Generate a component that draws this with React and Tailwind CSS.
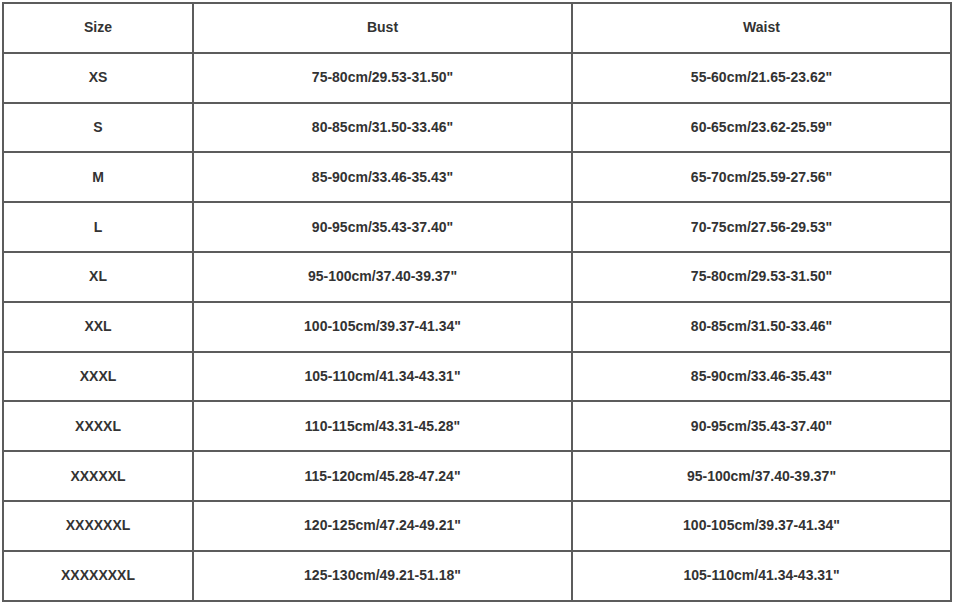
const rows = [
  ['XS', '75-80cm/29.53-31.50"', '55-60cm/21.65-23.62"'],
  ['S', '80-85cm/31.50-33.46"', '60-65cm/23.62-25.59"'],
  ['M', '85-90cm/33.46-35.43"', '65-70cm/25.59-27.56"'],
  ['L', '90-95cm/35.43-37.40"', '70-75cm/27.56-29.53"'],
  ['XL', '95-100cm/37.40-39.37"', '75-80cm/29.53-31.50"'],
  ['XXL', '100-105cm/39.37-41.34"', '80-85cm/31.50-33.46"'],
  ['XXXL', '105-110cm/41.34-43.31"', '85-90cm/33.46-35.43"'],
  ['XXXXL', '110-115cm/43.31-45.28"', '90-95cm/35.43-37.40"'],
  ['XXXXXL', '115-120cm/45.28-47.24"', '95-100cm/37.40-39.37"'],
  ['XXXXXXL', '120-125cm/47.24-49.21"', '100-105cm/39.37-41.34"'],
  ['XXXXXXXL', '125-130cm/49.21-51.18"', '105-110cm/41.34-43.31"'],
];

function Cell({ children }) {
  return (
    <div className="flex h-[47.8px] items-center justify-center bg-white text-[14px] font-bold text-[#333]">
      {children}
    </div>
  );
}

export default function App() {
  return (
    <div className="min-h-[607px] w-[954px] bg-white pl-[2px] pt-[2px] font-['Liberation_Sans',Arial,sans-serif]">
      <div className="grid w-[950px] grid-cols-[188px_377px_377px] gap-[2px] bg-[#5c5c5c] p-[2px]">
        <Cell>Size</Cell>
        <Cell>Bust</Cell>
        <Cell>Waist</Cell>
        {rows.map((r) => (
          <>
            <Cell key={r[0] + 'a'}>{r[0]}</Cell>
            <Cell key={r[0] + 'b'}>{r[1]}</Cell>
            <Cell key={r[0] + 'c'}>{r[2]}</Cell>
          </>
        ))}
      </div>
    </div>
  );
}
